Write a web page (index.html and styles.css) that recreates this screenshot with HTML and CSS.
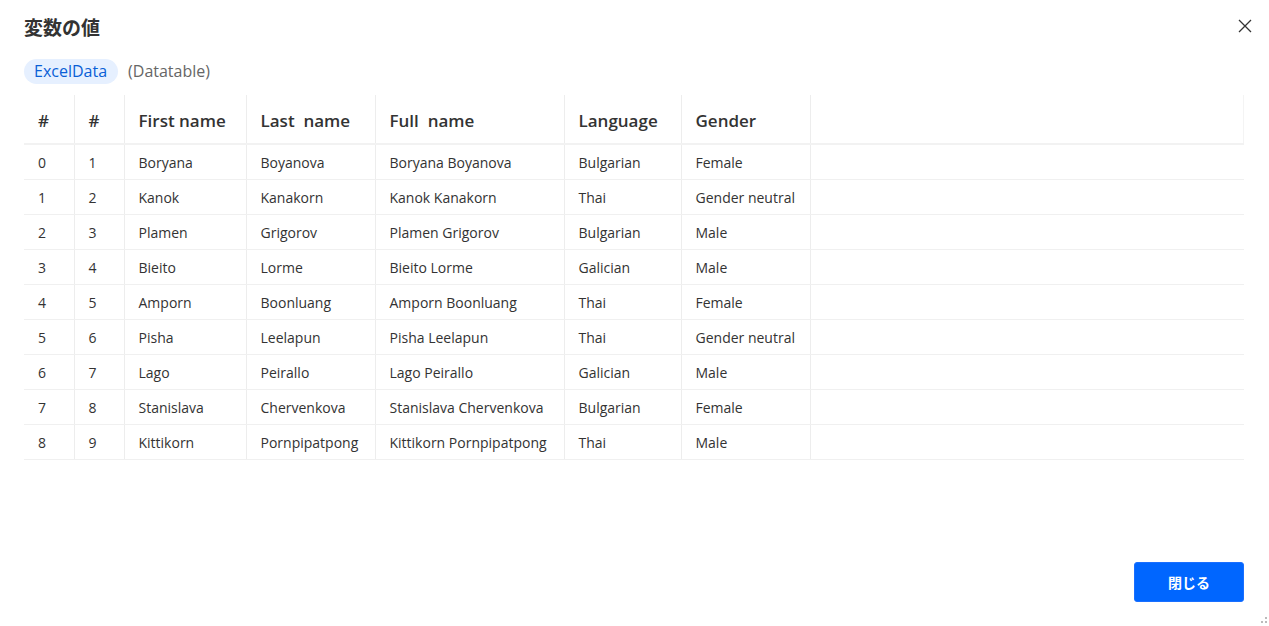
FILE: index.html
```html
<!DOCTYPE html>
<html lang="ja">
<head>
<meta charset="utf-8">
<link rel="stylesheet" href="styles.css">
</head>
<body>
<div class="dialog">
  <div class="header">
    <h1 class="title">変数の値</h1>
    <button class="close" aria-label="close">
      <svg width="14" height="14" viewBox="0 0 14 14"><path d="M1 1L13 13M13 1L1 13" stroke="#333" stroke-width="1.3" fill="none"/></svg>
    </button>
  </div>
  <div class="var">
    <span class="pill">ExcelData</span>
    <span class="type">(Datatable)</span>
  </div>
  <table class="grid">
    <colgroup>
      <col style="width:50px"><col style="width:50px"><col style="width:122px"><col style="width:129px"><col style="width:189px"><col style="width:117px"><col style="width:129px"><col>
    </colgroup>
    <thead>
      <tr><th>#</th><th>#</th><th>First name</th><th>Last&nbsp; name</th><th>Full&nbsp; name</th><th>Language</th><th>Gender</th><th class="last"></th></tr>
    </thead>
    <tbody>
      <tr><td>0</td><td>1</td><td>Boryana</td><td>Boyanova</td><td>Boryana Boyanova</td><td>Bulgarian</td><td>Female</td><td class="last"></td></tr>
      <tr><td>1</td><td>2</td><td>Kanok</td><td>Kanakorn</td><td>Kanok Kanakorn</td><td>Thai</td><td>Gender neutral</td><td class="last"></td></tr>
      <tr><td>2</td><td>3</td><td>Plamen</td><td>Grigorov</td><td>Plamen Grigorov</td><td>Bulgarian</td><td>Male</td><td class="last"></td></tr>
      <tr><td>3</td><td>4</td><td>Bieito</td><td>Lorme</td><td>Bieito Lorme</td><td>Galician</td><td>Male</td><td class="last"></td></tr>
      <tr><td>4</td><td>5</td><td>Amporn</td><td>Boonluang</td><td>Amporn Boonluang</td><td>Thai</td><td>Female</td><td class="last"></td></tr>
      <tr><td>5</td><td>6</td><td>Pisha</td><td>Leelapun</td><td>Pisha Leelapun</td><td>Thai</td><td>Gender neutral</td><td class="last"></td></tr>
      <tr><td>6</td><td>7</td><td>Lago</td><td>Peirallo</td><td>Lago Peirallo</td><td>Galician</td><td>Male</td><td class="last"></td></tr>
      <tr><td>7</td><td>8</td><td>Stanislava</td><td>Chervenkova</td><td>Stanislava Chervenkova</td><td>Bulgarian</td><td>Female</td><td class="last"></td></tr>
      <tr><td>8</td><td>9</td><td>Kittikorn</td><td>Pornpipatpong</td><td>Kittikorn Pornpipatpong</td><td>Thai</td><td>Male</td><td class="last"></td></tr>
    </tbody>
  </table>
  <div class="spacer"></div>
  <div class="footer">
    <button class="primary">閉じる</button>
  </div>
  <svg class="grip" width="6" height="6" viewBox="0 0 6 6"><rect x="4" y="0" width="2" height="2" fill="#bbb"/><rect x="0" y="4" width="2" height="2" fill="#bbb"/><rect x="4" y="4" width="2" height="2" fill="#bbb"/></svg>
</div>
</body>
</html>
```
FILE: styles.css
```css
html, body {
  margin: 0;
  padding: 0;
  background: #fff;
}
body {
  font-family: "Open Sans", "Noto Sans", "Noto Sans CJK JP", sans-serif;
  color: #333;
}
.dialog {
  position: relative;
  width: 1269px;
  height: 626px;
  box-sizing: border-box;
  padding: 0 25px 24px 24px;
  display: flex;
  flex-direction: column;
}
.header {
  display: flex;
  align-items: center;
  justify-content: space-between;
  height: 52px;
}
.title {
  margin: 0;
  font-family: "Noto Sans CJK JP", sans-serif;
  font-size: 19px;
  font-weight: 700;
  color: #333;
  padding-top: 1px;
}
.close {
  border: none;
  background: none;
  padding: 0;
  width: 16px;
  height: 16px;
  display: flex;
  align-items: center;
  justify-content: center;
  margin-right: -9px;
}
.var {
  display: flex;
  align-items: center;
  height: 26px;
  margin-top: 6px;
  gap: 10px;
}
.pill {
  background: #e6f0ff;
  color: #0a5fd6;
  font-size: 16px;
  line-height: 25px;
  padding: 0 11px 0 10px;
  border-radius: 13px;
}
.type {
  color: #666;
  font-size: 16px;
}
.grid {
  margin-top: 11px;
  width: 1220px;
  border-collapse: collapse;
  table-layout: fixed;
}
.grid th, .grid td {
  text-align: left;
  padding: 0 0 0 14px;
  border-right: 1px solid #ededed;
  border-bottom: 1px solid #f0f0f0;
  white-space: nowrap;
}
.grid th.last, .grid td.last {
  border-right: none;
}
.grid thead th.last {
  border-right: 1px solid #f4f4f4;
}
.grid th {
  height: 49px;
  padding-top: 3px;
  box-sizing: border-box;
  font-size: 17px;
  font-weight: 600;
  color: #333;
  border-bottom: 2px solid #f2f2f2;
}
.grid td {
  height: 34px;
  font-size: 14px;
  color: #333;
}
.spacer {
  flex: 1;
}
.footer {
  display: flex;
  justify-content: flex-end;
}
.primary {
  width: 110px;
  height: 40px;
  background: #0066ff;
  border: 1px solid #1a6fff;
  border-radius: 3px;
  color: #fff;
  font-family: "Noto Sans CJK JP", sans-serif;
  font-size: 14px;
  font-weight: 700;
}
.grip {
  position: absolute;
  right: 2px;
  bottom: 3px;
}
```
